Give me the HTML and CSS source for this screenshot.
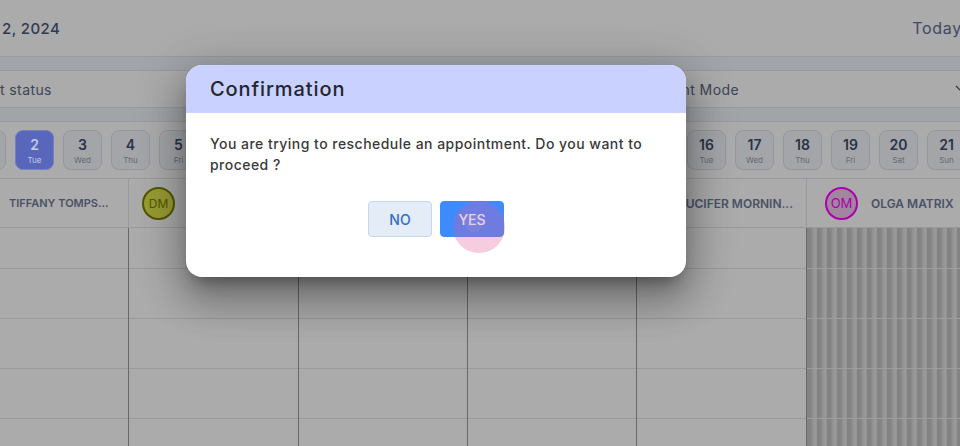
FILE: index.html
```html
<!DOCTYPE html>
<html lang="en">
<head>
  <meta charset="UTF-8">
  <meta name="viewport" content="width=device-width, initial-scale=1.0">
  <title>Calendar</title>
  <link rel="stylesheet" href="styles.css">
</head>
<body>
  <!-- Calendar page behind the dialog -->
  <div class="page">
    <header class="top-bar">
      <span class="current-date">2, 2024</span>
      <span class="today">Today</span>
    </header>

    <div class="filter-band">
      <div class="filters">
        <div class="filter filter-status">t status</div>
        <div class="filter filter-mode">
          <span>Appointment Mode</span>
          <svg class="chevron" width="14" height="8" viewBox="0 0 14 8"><path d="M1 1l6 6 6-6" fill="none" stroke="#3f4757" stroke-width="1.2"/></svg>
        </div>
      </div>
    </div>

    <div class="days">
      <div class="day"><b>1</b><small>Mon</small></div>
      <div class="day day-active"><b>2</b><small>Tue</small></div>
      <div class="day"><b>3</b><small>Wed</small></div>
      <div class="day"><b>4</b><small>Thu</small></div>
      <div class="day"><b>5</b><small>Fri</small></div>
      <div class="day"><b>6</b><small>Sat</small></div>
      <div class="day"><b>7</b><small>Sun</small></div>
      <div class="day"><b>8</b><small>Mon</small></div>
      <div class="day"><b>9</b><small>Tue</small></div>
      <div class="day"><b>10</b><small>Wed</small></div>
      <div class="day"><b>11</b><small>Thu</small></div>
      <div class="day"><b>12</b><small>Fri</small></div>
      <div class="day"><b>13</b><small>Sat</small></div>
      <div class="day"><b>14</b><small>Sun</small></div>
      <div class="day"><b>15</b><small>Mon</small></div>
      <div class="day"><b>16</b><small>Tue</small></div>
      <div class="day"><b>17</b><small>Wed</small></div>
      <div class="day"><b>18</b><small>Thu</small></div>
      <div class="day"><b>19</b><small>Fri</small></div>
      <div class="day"><b>20</b><small>Sat</small></div>
      <div class="day"><b>21</b><small>Sun</small></div>
    </div>

    <div class="staff-row">
      <div class="staff staff-first"><span class="staff-name">TIFFANY TOMPS...</span></div>
      <div class="staff"><span class="avatar avatar-dm">DM</span></div>
      <div class="staff"></div>
      <div class="staff"></div>
      <div class="staff staff-lucifer"><span class="staff-name">LUCIFER MORNIN...</span></div>
      <div class="staff staff-last"><span class="avatar avatar-om">OM</span><span class="staff-name">OLGA MATRIX</span></div>
    </div>

    <div class="grid">
      <div class="col col-first"></div>
      <div class="col"></div>
      <div class="col"></div>
      <div class="col"></div>
      <div class="col"></div>
      <div class="col col-blocked"></div>
    </div>
  </div>

  <!-- Confirmation dialog -->
  <div class="overlay">
    <div class="dialog">
      <div class="dialog-title">Confirmation</div>
      <div class="dialog-body">
        <p>You are trying to reschedule an appointment. Do you want to proceed ?</p>
        <div class="dialog-actions">
          <button class="btn btn-no">NO</button>
          <button class="btn btn-yes">YES</button>
        </div>
      </div>
    </div>
    <span class="tap-mark"></span>
  </div>
</body>
</html>
```

FILE: styles.css
```css
/* Base Styling */
html, body {
  margin: 0;
  padding: 0;
  height: 446px;
  overflow: hidden;
}

body {
  position: relative;
  font-family: Inter, "Noto Sans", sans-serif;
  background-color: #fff;
  color: #3a4664;
}

.page {
  height: 446px;
  overflow: hidden;
}

/* Top Bar */
.top-bar {
  height: 57px;
  box-sizing: border-box;
  display: flex;
  justify-content: space-between;
  align-items: center;
  padding-left: 2px;
  border-bottom: 1px solid #e2e6ec;
}

.current-date {
  font-size: 15px;
  font-weight: 500;
  letter-spacing: 0.4px;
  color: #4a5878;
}

.today {
  font-size: 16px;
  letter-spacing: 0.7px;
  color: #5f6d94;
  margin-right: -2px;
}

/* Filters */
.filter-band {
  padding: 13px 0;
  background-color: #f0f5fb;
  border-bottom: 1px solid #e2e6ec;
}

.filters {
  display: flex;
  justify-content: space-between;
  height: 38px;
  box-sizing: border-box;
  background-color: #fff;
  border-top: 1px solid #e2e6ec;
  border-bottom: 1px solid #e2e6ec;
  font-size: 14px;
  letter-spacing: 0.4px;
  color: #5b6784;
}

.filter {
  display: flex;
  align-items: center;
}

.filter-mode {
  gap: 216px;
  margin-right: -9px;
}

/* Day Strip */
.days {
  display: flex;
  gap: 9px;
  margin-left: -33px;
  padding-top: 8px;
  height: 57px;
  border-bottom: 1px solid #e2e6ec;
  box-sizing: border-box;
}

.day {
  flex: 0 0 39px;
  height: 40px;
  box-sizing: border-box;
  border: 1px solid #dde1e9;
  border-radius: 8px;
  background-color: #f4f7fc;
  display: flex;
  flex-direction: column;
  align-items: center;
  padding-top: 4px;
}

.day b {
  font-size: 14px;
  line-height: 20px;
  font-weight: 600;
  color: #3f4d70;
}

.day small {
  font-size: 8px;
  line-height: 11px;
  color: #959cae;
}

/* Sits above the overlay, its blue is brighter than the dimmed page allows */
.day-active {
  position: relative;
  z-index: 1;
  background-color: #5866bc;
  border-color: #7580c0;
}

.day-active b {
  color: #c4cbe8;
}

.day-active small {
  color: #c4cbe8;
}

/* Staff Header */
.staff-row {
  display: grid;
  grid-template-columns: 128px 170px 169px 169px 170px 154px;
  height: 49px;
  border-bottom: 1px solid #e2e6ec;
  box-sizing: border-box;
}

.staff {
  display: flex;
  align-items: center;
  gap: 13px;
  padding-left: 13px;
  border-left: 1px solid #e2e6ec;
  font-size: 12px;
  font-weight: 600;
  color: #6f7b9a;
}

.staff-first {
  border-left: none;
  padding-left: 9px;
  font-size: 11px;
}

.staff-lucifer {
  justify-content: flex-end;
  padding-right: 13px;
  white-space: nowrap;
}

.staff-last {
  padding-left: 18px;
}

.avatar {
  flex: 0 0 33px;
  height: 33px;
  box-sizing: border-box;
  border-radius: 50%;
  border: 2px solid;
  display: flex;
  align-items: center;
  justify-content: center;
  font-weight: 400;
}

.avatar-dm {
  background-color: #e2e84c;
  border-color: #7c8000;
  color: #7c8000;
}

.avatar-om {
  background-color: #f2c8ee;
  border-color: #ff00ff;
  color: #ff00ff;
  font-size: 13px;
}

/* Schedule Grid */
.grid {
  display: grid;
  grid-template-columns: 128px 170px 169px 169px 170px 154px;
  height: 218px;
  background-image: linear-gradient(to bottom, transparent 49px, #e6e6e6 49px);
  background-size: 100% 50px;
  background-position: 0 -9px;
}

.col {
  border-left: 1px solid #9a9a9a;
}

.col-first {
  border-left: none;
}

.col-blocked {
  background-image:
    linear-gradient(to bottom, transparent 49px, #eaeaea 49px),
    repeating-linear-gradient(to right, #c2c2c2 0, #c6c6c6 4px, #dcdcdc 6px, #e6e6e6 8px, #dedede 9.5px, #c2c2c2 10px);
  background-size: 100% 50px, auto;
  background-position: 0 -9px, 0 0;
}

/* Overlay And Dialog */
.overlay {
  position: absolute;
  inset: 0;
  background-color: rgba(0, 0, 0, 0.33);
}

.dialog {
  position: relative;
  z-index: 2;
  width: 500px;
  height: 212px;
  margin: 65px 0 0 186px;
  border-radius: 16px;
  overflow: hidden;
  background-color: #fff;
  box-shadow: 0 11px 15px -7px rgba(0, 0, 0, 0.35), 0 24px 38px 3px rgba(0, 0, 0, 0.22), 0 9px 46px 8px rgba(0, 0, 0, 0.18);
}

.dialog-title {
  height: 48px;
  box-sizing: border-box;
  padding-left: 24px;
  background-color: #c9d1ff;
  font-size: 20px;
  line-height: 48px;
  font-weight: 500;
  letter-spacing: 0.9px;
  color: #24262e;
}

.dialog-body {
  padding: 20px 24px 0;
}

.dialog-body p {
  margin: 0;
  font-size: 14px;
  line-height: 21px;
  font-weight: 500;
  letter-spacing: 0.47px;
  color: #3a3a3a;
}

.dialog-actions {
  display: flex;
  justify-content: center;
  gap: 8px;
  margin-top: 26px;
}

.btn {
  width: 64px;
  height: 36px;
  box-sizing: border-box;
  border-radius: 4px;
  border: 1px solid #c8d7ea;
  font-family: inherit;
  font-size: 14px;
  font-weight: 500;
  padding: 0;
}

.btn-no {
  background-color: #e3ecf7;
  color: #2f6fc6;
}

.btn-yes {
  background-color: #3d8bff;
  border-color: #3d8bff;
  color: #fff;
}

/* Pink tap marker over the YES button */
.tap-mark {
  position: absolute;
  z-index: 3;
  left: 453px;
  top: 201px;
  width: 52px;
  height: 52px;
  border-radius: 50%;
  background-color: rgba(225, 90, 150, 0.3);
}

.tap-mark::after {
  content: "";
  position: absolute;
  left: 12px;
  top: 13px;
  width: 18px;
  height: 18px;
  border-radius: 50%;
  background-color: rgba(225, 225, 235, 0.08);
}
```
